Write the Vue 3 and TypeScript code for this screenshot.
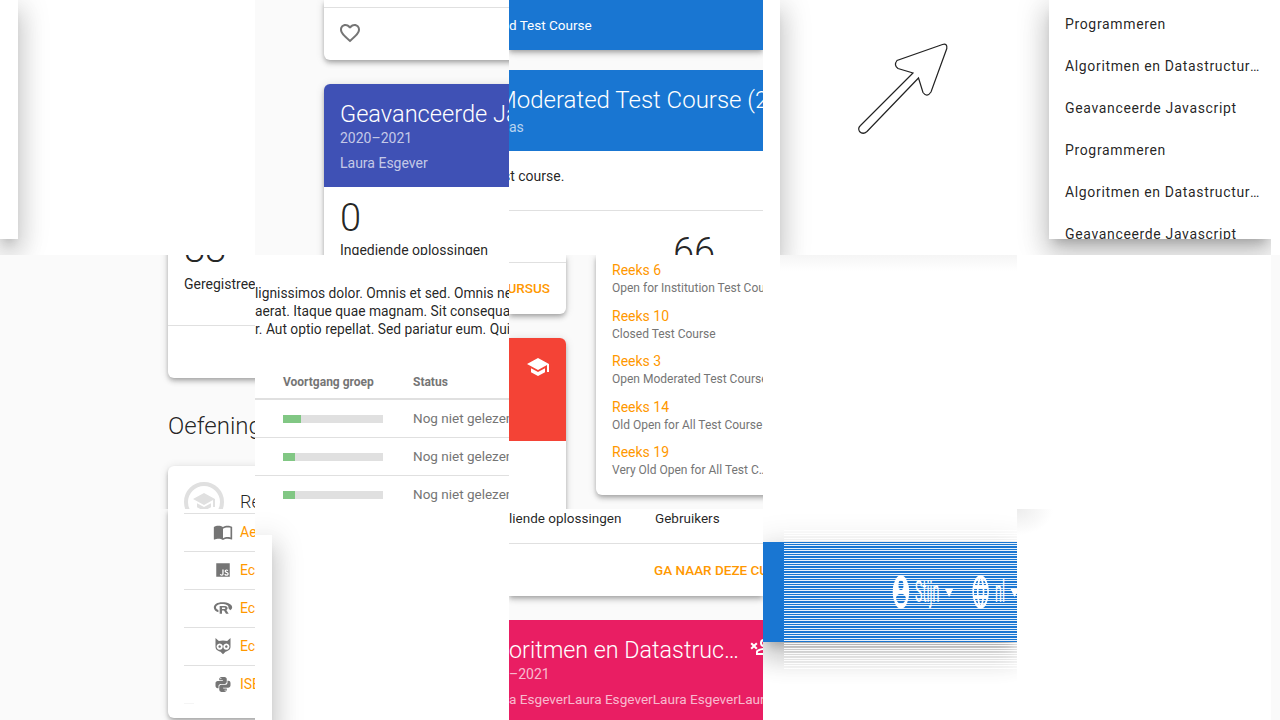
<template>
  <div class="tiles">
    <!-- row 1 -->
    <div class="tile white">
      <div class="edge edge-short"></div>
    </div>

    <div class="tile grey pl-69">
      <div class="card fav-card">
        <div class="fav-row">
          <svg class="icon heart" viewBox="0 0 24 24"><path :d="icons.heart" /></svg>
        </div>
      </div>
      <div class="card course-card">
        <div class="course-head indigo">
          <div class="course-title">Geavanceerde Javascript</div>
          <div class="course-sub">2020–2021</div>
          <div class="course-sub teacher">Laura Esgever</div>
        </div>
        <div class="stat zero">0</div>
        <div class="stat-label">Ingediende oplossingen</div>
      </div>
    </div>

    <div class="tile grey">
      <div class="blue-strip">d Test Course</div>
      <div class="blue-card">
        <div class="blue-head">
          <div class="course-title shift-title">Moderated Test Course (2020–2021)</div>
          <div class="course-sub">as</div>
        </div>
        <div class="blue-desc">st course.</div>
        <div class="blue-stat"><span class="stat">66</span></div>
      </div>
    </div>

    <div class="tile white row">
      <div class="edge edge-tall"></div>
      <svg class="arrow" viewBox="855 40 100 100">
        <path d="M942.5 44.5Q947.5 43 946.8 48.5L931 92Q927 98 923 92.5L918.5 78L867 131.5Q863 135 859.5 131.5Q857.5 128 860.5 125.5L913 73L898 68.5Q893.5 65 897 60.5Z" />
      </svg>
    </div>

    <div class="tile white pl-32">
      <div class="menu">
        <div v-for="(item, i) in menuItems" :key="i" class="menu-item">{{ item }}</div>
      </div>
    </div>

    <div class="tile white"></div>

    <!-- row 2 -->
    <div class="tile grey pl-168">
      <div class="card stat-card">
        <div class="stat">88</div>
        <div class="stat-label">Geregistreerde gebruikers</div>
        <div class="stat-line"></div>
      </div>
      <h2 class="section-title">Oefeningen</h2>
      <div class="card series-card">
        <div class="avatar">
          <svg class="icon cap" viewBox="0 0 24 24"><path :d="icons.school" /></svg>
        </div>
        <div class="series-name">Reeks</div>
      </div>
    </div>

    <div class="tile white">
      <div class="lorem">
        <div>lignissimos dolor. Omnis et sed. Omnis nemo sit.</div>
        <div>aerat. Itaque quae magnam. Sit consequatur et.</div>
        <div>r. Aut optio repellat. Sed pariatur eum. Quia et.</div>
      </div>
      <div class="prog-head">
        <span class="col-a">Voortgang groep</span>
        <span>Status</span>
      </div>
      <div v-for="(w, i) in progress" :key="i" class="prog-row">
        <span class="col-a">
          <span class="bar"><span class="bar-fill" :style="{ width: w + 'px' }"></span></span>
        </span>
        <span class="status">Nog niet gelezen</span>
      </div>
    </div>

    <div class="tile grey row gap-30">
      <div class="side-col">
        <div class="card go-card">
          <div class="go-line"></div>
          <div class="go-text"><span>URSUS</span></div>
        </div>
        <div class="card red-card">
          <div class="red-head">
            <svg class="icon red-cap" viewBox="0 0 24 24"><path :d="icons.school" /></svg>
          </div>
        </div>
      </div>
      <div class="card reeks-card">
        <div v-for="r in reeksen" :key="r.name" class="reeks-item">
          <div class="reeks-name">{{ r.name }}</div>
          <div class="reeks-course">{{ r.course }}</div>
        </div>
      </div>
    </div>

    <div class="tile fade-top"></div>
    <div class="tile white"></div>
    <div class="tile grey"></div>

    <!-- row 3 -->
    <div class="tile grey pl-168">
      <div class="card series-list">
        <div v-for="ex in exercises" :key="ex.label + ex.size + ex.icon.length" class="series-row">
          <span class="row-icon">
            <svg class="icon" :style="{ width: ex.size + 'px', height: ex.size + 'px' }" viewBox="0 0 24 24"><path :d="ex.icon" /></svg>
          </span>
          <span class="row-link">{{ ex.label }}</span>
        </div>
        <div class="series-end"></div>
      </div>
    </div>

    <div class="tile white">
      <div class="edge edge-low"></div>
    </div>

    <div class="tile white">
      <div class="foot-card">
        <div class="foot-stats">
          <span class="foot-a">liende oplossingen</span>
          <span>Gebruikers</span>
        </div>
        <div class="foot-link"><span>GA NAAR DEZE CURSUS</span></div>
      </div>
      <div class="foot-gap">
        <div class="pink-card">
          <div class="pink-top">
            <span class="course-title">oritmen en Datastruc…</span>
            <svg class="icon pink-icon" viewBox="0 0 24 24"><path :d="icons.accountRemove" /></svg>
          </div>
          <div class="course-sub">–2021</div>
          <div class="course-sub teacher">a EsgeverLaura EsgeverLaura EsgeverLaura Esgever</div>
        </div>
      </div>
    </div>

    <div class="tile white toolbar-tile">
      <div class="toolbar">
        <div class="toolbar-items">
          <svg class="icon tb-icon" viewBox="0 0 24 24"><path :d="icons.account" /></svg>
          <span class="tb-text">Stijn</span>
          <svg class="icon tb-icon" viewBox="0 0 24 24"><path :d="icons.drop" /></svg>
          <svg class="icon tb-icon tb-globe" viewBox="0 0 24 24"><path :d="icons.web" /></svg>
          <span class="tb-text">nl</span>
          <svg class="icon tb-icon" viewBox="0 0 24 24"><path :d="icons.drop" /></svg>
        </div>
      </div>
      <div class="stripes"></div>
    </div>

    <div class="tile corner-shade"></div>
    <div class="tile grey"></div>
  </div>
</template>

<script setup lang="ts">
const icons = {
  heart: 'M12.1,18.55L12,18.65L11.89,18.55C7.14,14.24 4,11.39 4,8.5C4,6.5 5.5,5 7.5,5C9.04,5 10.54,6 11.07,7.36H12.93C13.46,6 14.96,5 16.5,5C18.5,5 20,6.5 20,8.5C20,11.39 16.86,14.24 12.1,18.55M16.5,3C14.76,3 13.09,3.81 12,5.08C10.91,3.81 9.24,3 7.5,3C4.42,3 2,5.41 2,8.5C2,12.27 5.4,15.36 10.55,20.03L12,21.35L13.45,20.03C18.6,15.36 22,12.27 22,8.5C22,5.41 19.58,3 16.5,3Z',
  school: 'M12,3L1,9L12,15L21,10.09V17H23V9M5,13.18V17.18L12,21L19,17.18V13.18L12,17L5,13.18Z',
  account: 'M12,19.2C9.5,19.2 7.29,17.92 6,16C6.03,14 10,12.9 12,12.9C14,12.9 17.97,14 18,16C16.71,17.92 14.5,19.2 12,19.2M12,5A3,3 0 0,1 15,8A3,3 0 0,1 12,11A3,3 0 0,1 9,8A3,3 0 0,1 12,5M12,2A10,10 0 0,0 2,12A10,10 0 0,0 12,22A10,10 0 0,0 22,12A10,10 0 0,0 12,2Z',
  drop: 'M7,10L12,15L17,10H7Z',
  web: 'M16.36,14C16.44,13.34 16.5,12.68 16.5,12C16.5,11.32 16.44,10.66 16.36,10H19.74C19.9,10.64 20,11.31 20,12C20,12.69 19.9,13.36 19.74,14M14.59,19.56C15.19,18.45 15.65,17.25 15.97,16H18.92C17.96,17.65 16.43,18.93 14.59,19.56M14.34,14H9.66C9.56,13.34 9.5,12.68 9.5,12C9.5,11.32 9.56,10.65 9.66,10H14.34C14.43,10.65 14.5,11.32 14.5,12C14.5,12.68 14.43,13.34 14.34,14M12,19.96C11.17,18.76 10.5,17.43 10.09,16H13.91C13.5,17.43 12.83,18.76 12,19.96M8,8H5.08C6.03,6.34 7.57,5.06 9.4,4.44C8.8,5.55 8.35,6.75 8,8M5.08,16H8C8.35,17.25 8.8,18.45 9.4,19.56C7.57,18.93 6.03,17.65 5.08,16M4.26,14C4.1,13.36 4,12.69 4,12C4,11.31 4.1,10.64 4.26,10H7.64C7.56,10.66 7.5,11.32 7.5,12C7.5,12.68 7.56,13.34 7.64,14M12,4.03C12.83,5.23 13.5,6.57 13.91,8H10.09C10.5,6.57 11.17,5.23 12,4.03M18.92,8H15.97C15.65,6.75 15.19,5.55 14.59,4.44C16.43,5.07 17.96,6.34 18.92,8M12,2C6.47,2 2,6.5 2,12A10,10 0 0,0 12,22A10,10 0 0,0 22,12A10,10 0 0,0 12,2Z',
  accountRemove: 'M1.46,8.88L2.88,7.46L5,9.59L7.12,7.46L8.54,8.88L6.41,11L8.54,13.12L7.12,14.54L5,12.41L2.88,14.54L1.46,13.12L3.59,11L1.46,8.88M15,4A4,4 0 0,1 19,8A4,4 0 0,1 15,12A4,4 0 0,1 11,8A4,4 0 0,1 15,4M15,6A2,2 0 0,0 13,8A2,2 0 0,0 15,10A2,2 0 0,0 17,8A2,2 0 0,0 15,6M15,13C17.67,13 23,14.33 23,17V20H7V17C7,14.33 12.33,13 15,13M15,14.9C12,14.9 8.9,16.36 8.9,17V18.1H21.1V17C21.1,16.36 17.97,14.9 15,14.9Z',
  book: 'M21,5C19.89,4.65 18.67,4.5 17.5,4.5C15.55,4.5 13.45,4.9 12,6C10.55,4.9 8.45,4.5 6.5,4.5C4.55,4.5 2.45,4.9 1,6V20.65C1,20.9 1.25,21.15 1.5,21.15C1.6,21.15 1.65,21.1 1.75,21.1C3.1,20.45 5.05,20 6.5,20C8.45,20 10.55,20.4 12,21.5C13.35,20.65 15.8,20 17.5,20C19.15,20 20.85,20.3 22.25,21.05C22.35,21.1 22.4,21.1 22.5,21.1C22.75,21.1 23,20.85 23,20.6V6C22.4,5.55 21.75,5.25 21,5M21,18.5C19.9,18.15 18.7,18 17.5,18C15.8,18 13.35,18.65 12,19.5V8C13.35,7.15 15.8,6.5 17.5,6.5C18.7,6.5 19.9,6.65 21,7V18.5Z',
  js: 'M3,3H21V21H3V3M7.73,18.04C8.13,18.89 8.92,19.59 10.27,19.59C11.77,19.59 12.8,18.79 12.8,17.04V11.26H11.1V17C11.1,17.86 10.75,18.08 10.2,18.08C9.62,18.08 9.38,17.68 9.11,17.21L7.73,18.04M13.71,17.86C14.21,18.84 15.22,19.59 16.8,19.59C18.4,19.59 19.6,18.76 19.6,17.23C19.6,15.82 18.79,15.19 17.35,14.57L16.93,14.39C16.2,14.08 15.89,13.87 15.89,13.37C15.89,12.96 16.2,12.64 16.7,12.64C17.18,12.64 17.5,12.85 17.79,13.37L19.1,12.5C18.55,11.54 17.77,11.17 16.7,11.17C15.19,11.17 14.22,12.13 14.22,13.4C14.22,14.78 15.03,15.43 16.25,15.95L16.67,16.13C17.45,16.47 17.91,16.68 17.91,17.26C17.91,17.74 17.46,18.09 16.76,18.09C15.93,18.09 15.45,17.66 15.09,17.06L13.71,17.86Z',
  rlang: 'M11 5C5 5 1 7.7 1 11.3C1 14 3.2 16.1 6.5 17V14.5C4.6 13.8 3.6 12.7 3.6 11.2C3.6 9 6.8 7.2 11 7.2C15.5 7.2 18.6 8.8 18.6 11C18.6 11.4 18.5 11.7 18.4 12L20.6 14.6C22.2 13.6 23 12.4 23 11C23 7.5 18 5 11 5ZM8 9.5H14.5C16.5 9.5 17.5 10.7 17.5 12.2C17.5 13.2 17 14 16 14.4L18.8 19H15.6L13.2 15H10.8V19H8ZM10.8 11.5V13.2H13.8C14.4 13.2 14.8 12.9 14.8 12.4C14.8 11.9 14.4 11.5 13.8 11.5Z',
  owl: 'M3 2.5L7 6Q12 4.5 17 6L21 2.5V13C21 17 17 18.5 15 19L12 22L9 19C7 18.5 3 17 3 13ZM8 9A3.7 3.7 0 1 0 8.01 9ZM16 9A3.7 3.7 0 1 0 16.01 9ZM8 11.2a1.5 1.5 0 1 0 .01 0ZM16 11.2a1.5 1.5 0 1 0 .01 0Z',
  python: 'M19.14,7.5A2.86,2.86 0 0,1 22,10.36V14.14A2.86,2.86 0 0,1 19.14,17H12C12,17.39 12.32,17.96 12.71,17.96H17V19.64A2.86,2.86 0 0,1 14.14,22.5H9.86A2.86,2.86 0 0,1 7,19.64V15.89C7,14.31 8.28,13.04 9.86,13.04H15.11C16.69,13.04 17.96,11.76 17.96,10.18V7.5H19.14M14.86,19.29C14.46,19.29 14.14,19.59 14.14,20.18C14.14,20.77 14.46,20.89 14.86,20.89A0.71,0.71 0 0,0 15.57,20.18C15.57,19.59 15.25,19.29 14.86,19.29M4.86,17.5C3.28,17.5 2,16.22 2,14.64V10.86C2,9.28 3.28,8 4.86,8H12C12,7.61 11.68,7.04 11.29,7.04H7V5.36C7,3.78 8.28,2.5 9.86,2.5H14.14C15.72,2.5 17,3.78 17,5.36V9.11C17,10.69 15.72,11.96 14.14,11.96H8.89C7.31,11.96 6.04,13.24 6.04,14.82V17.5H4.86M9.14,5.71C9.54,5.71 9.86,5.41 9.86,4.82C9.86,4.23 9.54,4.11 9.14,4.11C8.75,4.11 8.43,4.23 8.43,4.82C8.43,5.41 8.75,5.71 9.14,5.71Z',
}

const menuItems: string[] = [
  'Programmeren',
  'Algoritmen en Datastructuren',
  'Geavanceerde Javascript',
  'Programmeren',
  'Algoritmen en Datastructuren',
  'Geavanceerde Javascript',
]

const progress: number[] = [18, 12, 12]

const reeksen = [
  { name: 'Reeks 6', course: 'Open for Institution Test Course' },
  { name: 'Reeks 10', course: 'Closed Test Course' },
  { name: 'Reeks 3', course: 'Open Moderated Test Course' },
  { name: 'Reeks 14', course: 'Old Open for All Test Course' },
  { name: 'Reeks 19', course: 'Very Old Open for All Test C…' },
]

const exercises = [
  { label: 'Aeque', icon: icons.book, size: 20 },
  { label: 'Ecce', icon: icons.js, size: 18 },
  { label: 'Ecce', icon: icons.rlang, size: 20 },
  { label: 'Ecce', icon: icons.owl, size: 20 },
  { label: 'ISBN', icon: icons.python, size: 18 },
]
</script>

<style scoped>
.tiles {
  display: grid;
  grid-template-columns: 255px 254px 254px 254px 254px 9px;
  grid-template-rows: 255px 254px 211px;
  width: 1280px;
  height: 720px;
  overflow: hidden;
  font-family: Roboto, "Liberation Sans", sans-serif;
  font-size: 14px;
  line-height: 20px;
  color: rgba(0, 0, 0, 0.87);
}

.tile {
  position: relative;
  overflow: hidden;
  min-width: 0;
  white-space: nowrap;
}

.white { background: #fff; }
.grey { background: #fafafa; }
.row { display: flex; }
.gap-30 { gap: 30px; }
.pl-32 { padding-left: 32px; }
.pl-69 { padding-left: 69px; }
.pl-168 { padding-left: 168px; }

.fade-top { background: #fff linear-gradient(#f5f5f5, #fff 16px) no-repeat 17px 0; }
.corner-shade {
  background: radial-gradient(ellipse 36px 26px at 0 0, #ececec, #fff);
}

.icon { display: block; fill: currentColor; fill-rule: evenodd; }

.edge {
  background: #fff;
  box-shadow: 0 8px 10px -5px rgba(0, 0, 0, 0.2), 0 16px 24px 2px rgba(0, 0, 0, 0.14), 0 6px 30px 5px rgba(0, 0, 0, 0.12);
}
.edge-short { width: 18px; height: 239px; }
.edge-tall { width: 17px; flex: none; }
.edge-low { width: 17px; height: 200px; margin-top: 26px; }

.card {
  background: #fff;
  border-radius: 6px;
  box-shadow: 0 2px 4px -1px rgba(0, 0, 0, 0.2), 0 4px 5px rgba(0, 0, 0, 0.14), 0 1px 10px rgba(0, 0, 0, 0.12);
}

.fav-card {
  width: 242px;
  height: 60px;
  padding-top: 7px;
  box-sizing: border-box;
  border-radius: 0 0 6px 6px;
}
.fav-row {
  border-top: 1px solid rgba(0, 0, 0, 0.12);
  padding: 13px 14px;
}
.heart { width: 24px; height: 24px; color: #757575; }

.course-card {
  width: 242px;
  height: 300px;
  margin-top: 24px;
  overflow: hidden;
}
.course-head {
  height: 103px;
  box-sizing: border-box;
  padding: 15px 16px 0;
  color: #fff;
}
.indigo { background: #3f51b5; }
.course-title {
  font-size: 23.6px;
  font-weight: 300;
  line-height: 30px;
  margin-bottom: -1px;
}
.course-sub { color: rgba(255, 255, 255, 0.7); }
.teacher { margin-top: 5px; }

.stat {
  font-size: 38px;
  font-weight: 300;
  line-height: 38px;
}
.zero { margin: 12px 16px 0; }
.stat-label { margin: 3px 16px 0; }

.blue-strip {
  height: 50px;
  background: #1976d2;
  color: #fff;
  font-size: 13.5px;
  line-height: 50px;
  box-shadow: 0 2px 4px -1px rgba(0, 0, 0, 0.2), 0 4px 5px rgba(0, 0, 0, 0.14), 0 1px 10px rgba(0, 0, 0, 0.12);
}
.blue-card {
  margin-top: 20px;
  height: 300px;
  background: #fff;
}
.blue-head {
  height: 81px;
  box-sizing: border-box;
  padding-top: 15px;
  background: #1976d2;
  color: #fff;
}
.shift-title { margin: 0 0 2px -13px; font-size: 24px; }
.blue-desc {
  padding-top: 15px;
  height: 60px;
  box-sizing: border-box;
  margin-left: -6px;
  border-bottom: 1px solid rgba(0, 0, 0, 0.12);
}
.blue-stat { padding: 22px 0 0 164px; }

.arrow {
  width: 100px;
  height: 100px;
  margin: 40px 0 0 75px;
  fill: #fff;
  stroke: #222;
  stroke-width: 1.2;
}

.menu {
  width: 222px;
  height: 239px;
  box-sizing: border-box;
  padding-top: 3px;
  overflow: hidden;
  background: #fff;
  box-shadow: 0 8px 10px -5px rgba(0, 0, 0, 0.2), 0 16px 24px 2px rgba(0, 0, 0, 0.14), 0 6px 30px 5px rgba(0, 0, 0, 0.12);
}
.menu-item {
  height: 42px;
  line-height: 42px;
  padding: 0 9px 0 16px;
  letter-spacing: 0.65px;
  overflow: hidden;
  text-overflow: ellipsis;
}

.stat-card {
  width: 300px;
  height: 148px;
  margin-top: -25px;
  padding-left: 16px;
  box-sizing: border-box;
}
.stat-card .stat-label { margin: 6px 0 0; }
.stat-line {
  height: 1px;
  margin: 31px 0 0 -16px;
  background: rgba(0, 0, 0, 0.12);
}
.section-title {
  margin: 33px 0 0;
  font-size: 24px;
  font-weight: 300;
  line-height: 30px;
}
.series-card {
  display: flex;
  gap: 16px;
  width: 300px;
  height: 90px;
  margin-top: 25px;
  padding: 16px;
  box-sizing: border-box;
  align-items: flex-start;
}
.avatar {
  display: flex;
  align-items: center;
  justify-content: center;
  width: 40px;
  height: 40px;
  box-sizing: border-box;
  border: 4px solid #e0e0e0;
  border-radius: 50%;
  flex: none;
}
.cap { width: 24px; height: 24px; color: #e0e0e0; }
.series-name {
  margin-top: 10px;
  font-size: 18px;
  font-weight: 300;
}

.lorem {
  padding-top: 29px;
  font-size: 13.8px;
  line-height: 18px;
}
.prog-head {
  display: flex;
  height: 35px;
  margin-top: 27px;
  align-items: center;
  box-sizing: border-box;
  border-bottom: 2px solid rgba(0, 0, 0, 0.12);
  font-size: 12px;
  font-weight: 700;
  color: #757575;
}
.col-a { display: flex; flex: none; width: 158px; padding-left: 28px; box-sizing: border-box; }
.prog-row {
  display: flex;
  align-items: center;
  height: 38px;
  box-sizing: border-box;
  border-bottom: 1px solid rgba(0, 0, 0, 0.12);
}
.prog-row:last-child { border-bottom: none; }
.bar {
  display: block;
  width: 100px;
  height: 8px;
  background: #e0e0e0;
}
.bar-fill { display: block; height: 8px; background: #81c784; }
.status { margin-bottom: 2px; font-size: 13.5px; color: #757575; }

.side-col { width: 57px; flex: none; }
.go-card {
  height: 59px;
  padding-top: 7px;
  box-sizing: border-box;
  border-radius: 0 0 6px 0;
}
.go-line { height: 1px; background: rgba(0, 0, 0, 0.12); }
.go-text {
  display: flex;
  justify-content: flex-end;
  padding: 15px 16px 0 0;
  font-size: 13.5px;
  font-weight: 500;
  color: #ff9800;
}
.red-card {
  height: 300px;
  margin-top: 24px;
  border-radius: 0 6px 0 0;
  overflow: hidden;
}
.red-head {
  height: 103px;
  padding: 17px 16px 0 17px;
  box-sizing: border-box;
  background: #f44336;
}
.red-cap { width: 24px; height: 24px; color: #fff; }

.reeks-card {
  width: 300px;
  height: 240px;
  flex: none;
  padding: 5px 16px 0;
  box-sizing: border-box;
  border-radius: 0 0 6px 6px;
}
.reeks-item { height: 45.5px; }
.reeks-name { color: #ff9800; }
.reeks-course {
  font-size: 12px;
  line-height: 16px;
  color: #757575;
}

.series-list {
  width: 300px;
  height: 209px;
  padding: 4px 0 0 16px;
  box-sizing: border-box;
  border-radius: 0 0 0 6px;
}
.series-row {
  display: flex;
  align-items: center;
  height: 38px;
  box-sizing: border-box;
  padding-bottom: 1px;
  border-top: 1px solid rgba(0, 0, 0, 0.12);
  color: #757575;
}
.row-icon {
  display: flex;
  justify-content: center;
  width: 20px;
  margin: 0 7px 0 29px;
}
.row-link { color: #ff9800; }
.series-end {
  width: 10px;
  height: 1px;
  background: rgba(0, 0, 0, 0.04);
}

.foot-card {
  position: relative;
  z-index: 1;
  height: 87px;
  background: #fff;
  font-size: 13.5px;
  box-shadow: 0 2px 4px -1px rgba(0, 0, 0, 0.2), 0 4px 5px rgba(0, 0, 0, 0.14), 0 1px 10px rgba(0, 0, 0, 0.12);
}
.foot-stats {
  display: flex;
  height: 35px;
  box-sizing: border-box;
  line-height: 18px;
  border-bottom: 1px solid rgba(0, 0, 0, 0.12);
}
.foot-a { width: 146px; }
.foot-link {
  padding: 16px 0 0 145px;
  font-weight: 500;
  color: #ff9800;
}
.foot-gap {
  padding-top: 24px;
  background: #fafafa;
  height: 200px;
}
.pink-card {
  height: 200px;
  padding-top: 15px;
  box-sizing: border-box;
  background: #e91e63;
  color: #fff;
}
.pink-top { display: flex; height: 29px; }
.pink-top .course-title { font-size: 23.3px; }
.pink-icon { width: 24px; height: 24px; margin: 0 0 0 10px; flex: none; }
.pink-card .teacher { font-size: 13.6px; }

.toolbar-tile { padding-top: 33px; }
.toolbar {
  height: 100px;
  padding-left: 128px;
  background: #1976d2;
  color: #fff;
  display: flex;
  align-items: center;
  box-shadow: 0 8px 10px -5px rgba(0, 0, 0, 0.2), 0 16px 24px 2px rgba(0, 0, 0, 0.14), 0 6px 30px 5px rgba(0, 0, 0, 0.12);
}
.toolbar-items {
  display: flex;
  align-items: center;
  flex: none;
  transform: scale(0.83, 1.67);
  transform-origin: left center;
}
.tb-icon { width: 24px; height: 24px; flex: none; }
.tb-text {
  margin-left: 5px;
  font-size: 15px;
  transform: scaleY(1.25);
}
.tb-globe { margin-left: 14px; }

.stripes {
  position: absolute;
  left: 21px;
  right: 0;
  top: 20px;
  bottom: 50px;
  background: repeating-linear-gradient(
    transparent 0, transparent 1px,
    rgba(255, 255, 255, 0.9) 1px, rgba(255, 255, 255, 0.9) 2px,
    transparent 2px, transparent 4px,
    rgba(255, 255, 255, 0.9) 4px, rgba(255, 255, 255, 0.9) 5px
  );
}
</style>

<style>
html, body { margin: 0; background: #fff; }
</style>
